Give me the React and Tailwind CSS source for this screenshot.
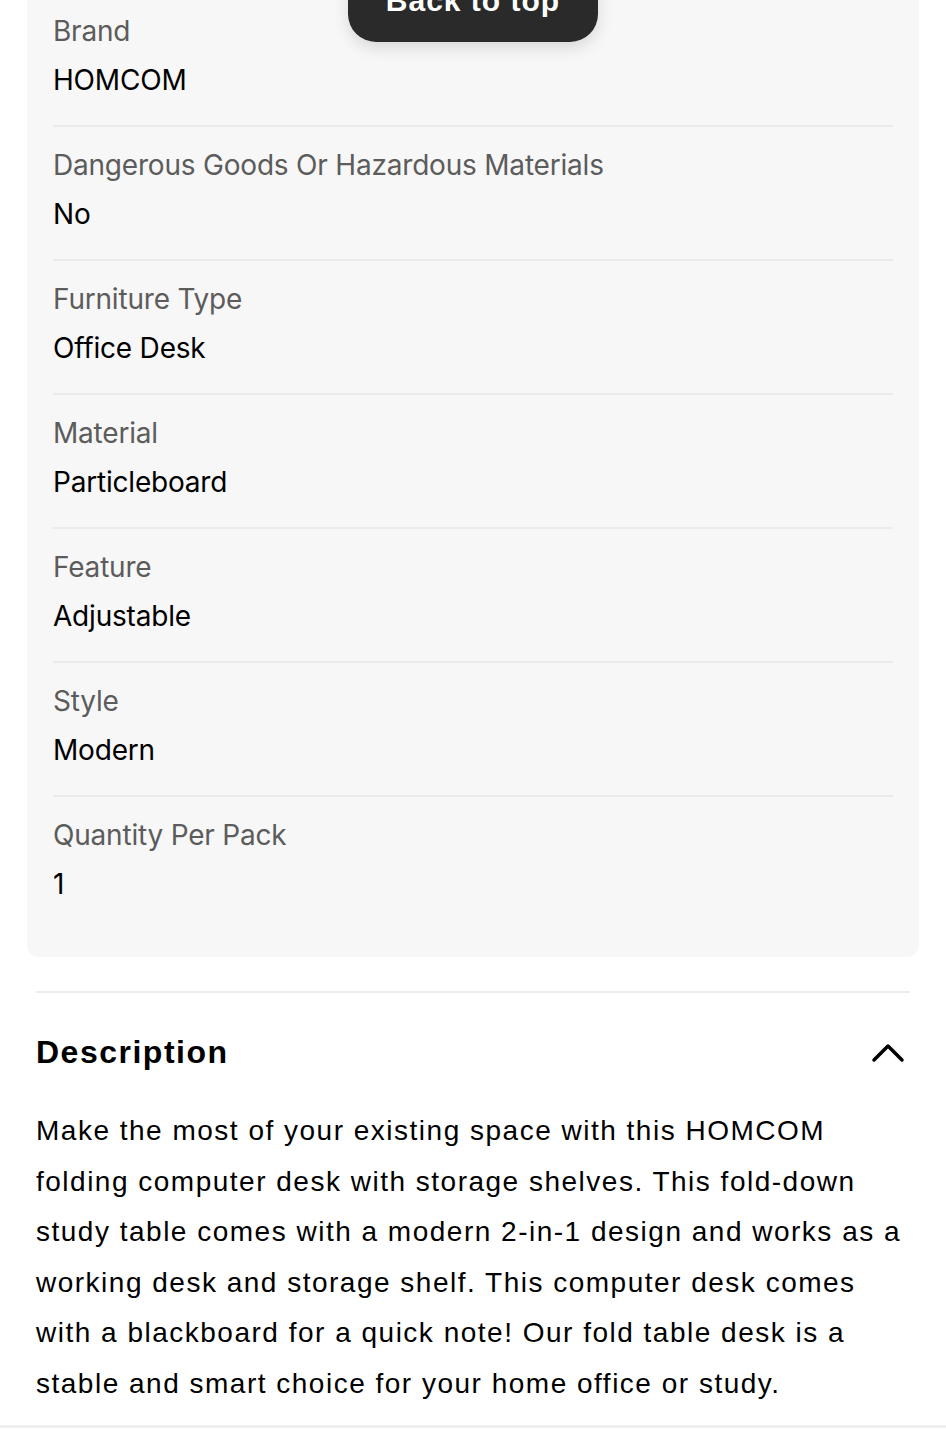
import React from "react";

const rows = [
  ["Brand", "HOMCOM"],
  ["Dangerous Goods Or Hazardous Materials", "No"],
  ["Furniture Type", "Office Desk"],
  ["Material", "Particleboard"],
  ["Feature", "Adjustable"],
  ["Style", "Modern"],
  ["Quantity Per Pack", "1"],
];

export default function App() {
  return (
    <div className="relative w-[946px] h-[1440px] overflow-hidden bg-white">
      <div className="absolute left-[348px] top-[-42px] w-[250px] h-[84px] rounded-[28px] bg-[#2a2a2a] shadow-[0_6px_16px_rgba(0,0,0,0.12)] flex items-center justify-center z-10">
        <span className="text-white text-[30px] font-semibold leading-none font-['Liberation_Sans',Arial,sans-serif] tracking-[1px] translate-y-[1px]">Back to top</span>
      </div>

      <div className="ml-[27px] w-[892px] bg-[#f7f7f7] rounded-b-[12px] px-[26px] pb-[26px] font-['Inter',sans-serif] tracking-[-0.2px]">
        {rows.map(([label, value], i) => (
          <div
            key={label}
            className={
              (i === 0 ? "pt-[11px] " : "pt-[18px] ") +
              (i < rows.length - 1 ? "border-b-2 border-[#ebebeb] pb-[25px]" : "pb-[27px]")
            }
          >
            <div className="h-[40px] leading-[40px] text-[28px] text-[#5c5c5c]">{label}</div>
            <div className="mt-[9px] h-[40px] leading-[40px] text-[28px] text-black">{value}</div>
          </div>
        ))}
      </div>

      <div className="mx-[36px] mt-[34px] h-[2px] bg-[#ececec]" />

      <div className="px-[36px] font-['Liberation_Sans',Arial,sans-serif]">
        <div className="flex items-center justify-between h-[60px] mt-[29px]">
          <h2 className="text-[32px] font-bold text-black tracking-[1.5px]">Description</h2>
          <svg width="34" height="22" viewBox="0 0 34 22" className="mr-[5px]">
            <path d="M3 19 L17 5 L31 19" fill="none" stroke="black" strokeWidth="3.5" strokeLinecap="round" strokeLinejoin="round" />
          </svg>
        </div>
        <p className="mt-[24px] text-[28px] leading-[50.6px] text-black tracking-[1.5px]">
          Make the most of your existing space with this HOMCOM folding computer desk with storage shelves. This fold-down study table comes with a modern 2-in-1 design and works as a working desk and storage shelf. This computer desk comes with a blackboard for a quick note! Our fold table desk is a stable and smart choice for your home office or study.
        </p>
      </div>
      <div className="absolute left-0 top-[1425px] w-full h-[3px] bg-[#efefef]" />
    </div>
  );
}
